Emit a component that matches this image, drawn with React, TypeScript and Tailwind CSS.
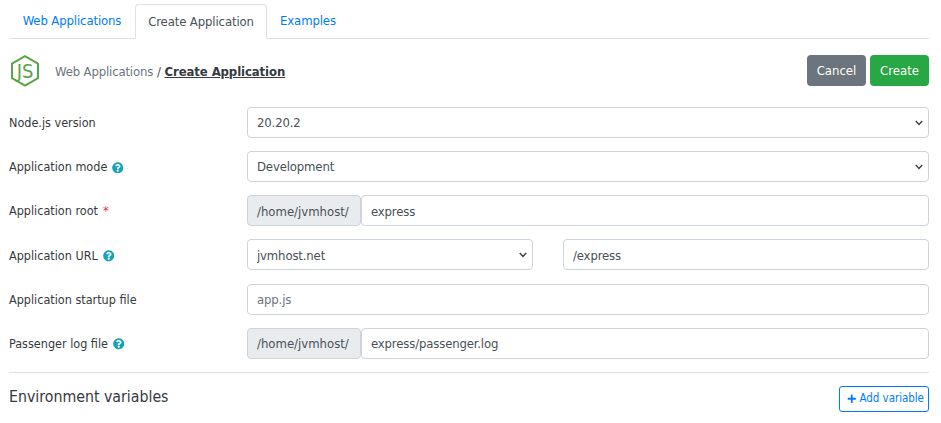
import { FaPlus, FaQuestionCircle } from "react-icons/fa";

const tabs = [
  { label: "Web Applications", width: "w-[126px]" },
  { label: "Create Application", active: true, width: "w-[132px]" },
  { label: "Examples", width: "w-[82px]" },
];

function Help() {
  return <FaQuestionCircle className="size-[11.5px] text-[#17a2b8]" />;
}

function Field({ label, children }: { label: React.ReactNode; children: React.ReactNode }) {
  return (
    <div className="flex h-[31px] items-center">
      <label className="flex w-[238px] shrink-0 items-center gap-[5px] pt-[2px] text-[12.5px]">{label}</label>
      <div className="flex min-w-0 flex-1">{children}</div>
    </div>
  );
}

const inputCls =
  "h-[31px] w-full min-w-0 rounded-[4px] border border-[#ced4da] bg-white px-[9px] pt-px text-[13px] tracking-[-0.15px] text-[#495057] outline-none placeholder:text-[#6c757d]";

function Select({ value, className = "w-full" }: { value: string; className?: string }) {
  return (
    <div className={`relative ${className}`}>
      <select defaultValue={value} className={`${inputCls} appearance-none`}>
        <option>{value}</option>
      </select>
      {/* native arrow, drawn so it stays thin */}
      <svg
        viewBox="0 0 8 6"
        className="pointer-events-none absolute right-[6px] top-[13px] h-[6px] w-[8px]"
        fill="none"
        stroke="#3c4248"
        strokeWidth="1.5"
      >
        <path d="M0.8 1 L4 4.4 L7.2 1" />
      </svg>
    </div>
  );
}

function Prefixed({ value }: { value: string }) {
  return (
    <>
      <span className="flex h-[31px] w-[114px] shrink-0 items-center rounded-[4px] border border-[#ced4da] bg-[#e9ecef] px-[9px] pt-px text-[#495057]">
        /home/jvmhost/
      </span>
      <input defaultValue={value} className={inputCls} />
    </>
  );
}

function NodeLogo() {
  return (
    <svg viewBox="0 0 31 33" className="ml-px h-[33px] w-[31px] shrink-0" fill="none">
      <path
        d="M15 2.2 L28 9.6 V24.2 L15 31.6 L2 24.2 V9.6 Z"
        stroke="#5aa545"
        strokeWidth="2"
        strokeLinejoin="round"
      />
      <text
        x="15"
        y="24"
        textAnchor="middle"
        fontSize="20"
        fontFamily="'DejaVu Sans Condensed', sans-serif"
        fill="#5aa545"
      >
        JS
      </text>
    </svg>
  );
}

export default function App() {
  return (
    <div className="h-[423px] w-[941px] overflow-hidden bg-white pl-[9px] pr-[12px] pt-1 font-['DejaVu_Sans_Condensed',sans-serif] text-[13px] text-[#343a40]">
      {/* Tabs */}
      <div className="flex h-[35px] border-b border-[#dee2e6]">
        {tabs.map((t) => (
          <a
            key={t.label}
            className={
              t.active
                ? `${t.width} -mb-px flex h-[35px] items-center justify-center rounded-t-[4px] border border-[#dee2e6] border-b-white bg-white tracking-[-0.12px] text-[#495057]`
                : `${t.width} flex h-[34px] items-center justify-center tracking-[-0.12px] text-[#007bff]`
            }
          >
            {t.label}
          </a>
        ))}
      </div>

      {/* Header */}
      <div className="mt-[16px] flex h-[31px] items-center">
        <NodeLogo />
        <div className="ml-[14px] flex-1 pt-[2px]">
          <span className="tracking-[-0.15px] text-[#6c757d]">Web Applications</span>
          <span className="text-[#495057]"> / </span>
          <span className="font-bold tracking-[-0.1px] text-[#343a40] underline">Create Application</span>
        </div>
        <button className="mr-[4px] h-[31px] w-[59px] rounded-[4px] bg-[#6c757d] pt-px text-white">Cancel</button>
        <button className="h-[31px] w-[59px] rounded-[4px] bg-[#28a745] pt-px text-white">Create</button>
      </div>

      {/* Form */}
      <div className="mt-[21px] flex flex-col gap-[13.15px]">
        <Field label="Node.js version">
          <Select value="20.20.2" />
        </Field>
        <Field label={<>Application mode <Help /></>}>
          <Select value="Development" />
        </Field>
        <Field label={<>Application root <span className="text-[#dc3545]">*</span></>}>
          <Prefixed value="express" />
        </Field>
        <Field label={<>Application URL <Help /></>}>
          <div className="flex w-full gap-[30px]">
            <Select value="jvmhost.net" className="w-[286px] shrink-0" />
            <input defaultValue="/express" className={inputCls} />
          </div>
        </Field>
        <Field label="Application startup file">
          <input placeholder="app.js" className={inputCls} />
        </Field>
        <Field label={<>Passenger log file <Help /></>}>
          <Prefixed value="express/passenger.log" />
        </Field>
      </div>

      <hr className="mt-[13px] border-[#dee2e6]" />

      {/* Environment variables */}
      <div className="mt-[13px] flex h-[26px] justify-between">
        <h5 className="text-[15.75px] leading-[22px] text-[#343a40]">Environment variables</h5>
        <button className="flex h-[26px] w-[90px] items-center gap-[3px] rounded-[3px] border border-[#007bff] pl-[7px] text-[11.5px] tracking-[-0.05px] text-[#007bff]">
          <FaPlus className="size-[9.5px]" />
          Add variable
        </button>
      </div>
    </div>
  );
}
